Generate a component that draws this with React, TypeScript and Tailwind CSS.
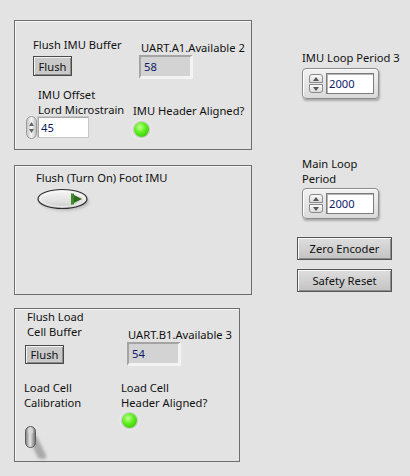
import React from "react";

const Flush = ({ h = "h-[20px]" }: { h?: string }) => (
  <div
    className={`w-[39px] ${h} flex items-center justify-center bg-[#c9c9c9] border border-[#4a4a4a] shadow-[inset_1px_1px_0_#f2f2f2,inset_-1px_-1px_0_#8c8c8c]`}
  >
    Flush
  </div>
);

const Indicator = ({ value }: { value: string }) => (
  <div className="w-[54px] h-[24px] flex items-center pl-[3px] bg-[#d3d3d3] border-t-2 border-l-2 border-b-[3px] border-r-[3px] border-t-[#a4a4a4] border-l-[#a4a4a4] border-b-[#f3f3f3] border-r-[#f3f3f3] text-[#0d1a66]">
    {value}
  </div>
);

const Led = () => (
  <div className="w-[15px] h-[15px] rounded-full bg-[radial-gradient(circle_at_40%_35%,#c6ff9a_0%,#5ef01f_40%,#2fb200_100%)] shadow-[0_0_0_1.5px_#d0d0d0,0_0_0_2.5px_#ececec]" />
);

const Spin = () => (
  <div className="flex flex-col gap-[1px] w-[14px]">
    <div className="h-[9px] rounded-t-[3px] border border-[#8a8a8a] bg-[linear-gradient(#fafafa,#dcdcdc)] flex items-center justify-center">
      <svg width="6" height="4" viewBox="0 0 6 4">
        <path d="M0 4 L3 0 L6 4 Z" fill="#555" />
      </svg>
    </div>
    <div className="h-[9px] rounded-b-[3px] border border-[#8a8a8a] bg-[linear-gradient(#fafafa,#dcdcdc)] flex items-center justify-center">
      <svg width="6" height="4" viewBox="0 0 6 4">
        <path d="M0 0 L6 0 L3 4 Z" fill="#555" />
      </svg>
    </div>
  </div>
);

const FramedNumeric = ({ value }: { value: string }) => (
  <div className="w-[77px] h-[31px] flex items-center gap-[3px] pl-[6px] rounded-[4px] border border-[#8c8c8c] bg-[linear-gradient(#f2f2f2,#dadada)] shadow-[1px_2px_2px_rgba(0,0,0,0.25),inset_1px_1px_0_#ffffff]">
    <Spin />
    <div className="w-[48px] h-[21px] flex items-center pl-[2px] bg-white border border-[#7c7c7c] shadow-[inset_1px_1px_0_#b5b5b5] text-[#0d1a66]">
      {value}
    </div>
  </div>
);

const BigButton = ({ label }: { label: string }) => (
  <div className="w-[95px] h-[23px] flex items-center justify-center bg-[linear-gradient(#dedede,#c3c3c3)] border border-[#555] shadow-[inset_1px_1px_0_#fafafa,inset_-1px_-1px_0_#8e8e8e]">
    {label}
  </div>
);

const OvalButton = () => (
  <svg width="56" height="27" viewBox="0 0 56 27">
    <defs>
      <linearGradient id="ov" x1="0" y1="0" x2="0" y2="1">
        <stop offset="0" stopColor="#f6f6f6" />
        <stop offset="0.6" stopColor="#e2e2e2" />
        <stop offset="1" stopColor="#c8c8c8" />
      </linearGradient>
      <filter id="ovb" x="-20%" y="-40%" width="140%" height="180%">
        <feGaussianBlur stdDeviation="1.5" />
      </filter>
    </defs>
    <ellipse cx="27.5" cy="13.5" rx="24.5" ry="9" fill="#9a9a9a" opacity="0.6" filter="url(#ovb)" />
    <ellipse cx="25.5" cy="11" rx="24.5" ry="9.5" fill="url(#ov)" stroke="#2d2d2d" strokeWidth="1.2" />
    <ellipse cx="25.5" cy="11" rx="22" ry="7.5" fill="none" stroke="#ffffff" strokeWidth="0.8" opacity="0.8" />
    <path d="M34 5.5 L45 11 L34 16.5 Z" fill="#2f6b1f" />
    <path d="M34 5.5 L37 5.5 L37 16.5 L34 16.5 Z" fill="#3f8a2a" />
  </svg>
);

const Toggle = () => (
  <svg width="26" height="36" viewBox="0 0 26 36">
    <defs>
      <linearGradient id="tg" x1="0" y1="0" x2="1" y2="0">
        <stop offset="0" stopColor="#7a7a7a" />
        <stop offset="0.45" stopColor="#e6e6e6" />
        <stop offset="1" stopColor="#6e6e6e" />
      </linearGradient>
      <filter id="tgb" x="-50%" y="-50%" width="200%" height="200%">
        <feGaussianBlur stdDeviation="1.6" />
      </filter>
    </defs>
    <path d="M6 16 L12 10 L22 30 Q23 34 19 34 L14 33 Z" fill="#a9a9a9" filter="url(#tgb)" />
    <rect x="1.5" y="1.5" width="10" height="21" rx="5" fill="url(#tg)" stroke="#5a5a5a" strokeWidth="1" />
    <ellipse cx="6.5" cy="6" rx="3" ry="3" fill="#d9d9d9" opacity="0.7" />
  </svg>
);

const App = () => {
  return (
    <div className="w-[410px] h-[476px] flex bg-[#e3e3e3] text-[11.2px] leading-[15px] text-[#111] font-['Noto_Sans',sans-serif]">
      {/* left: three grouped frames */}
      <div className="w-[252px] flex flex-col pl-[14px] pt-[20px]">
        <div className="w-[238px] h-[130px] flex border border-[#6e6e6e] shadow-[inset_1px_1px_0_#f6f6f6]">
          <div className="w-[117px] flex flex-col pl-[11px]">
            <div className="ml-[7px] mt-[16px] whitespace-nowrap">Flush IMU Buffer</div>
            <div className="ml-[7px] mt-[4px]">
              <Flush />
            </div>
            <div className="ml-[12px] mt-[11px] whitespace-nowrap">
              IMU Offset
              <br />
              Lord Microstrain
            </div>
            <div className="flex mt-[-1px]">
              <div className="w-[11px] h-[23px] flex flex-col items-center justify-center gap-[3px] rounded-full border border-[#9a9a9a] bg-[linear-gradient(90deg,#c8c8c8,#f4f4f4,#c2c2c2)]">
                <svg width="5" height="4" viewBox="0 0 5 4">
                  <path d="M0 4 L2.5 0 L5 4 Z" fill="#666" />
                </svg>
                <svg width="5" height="4" viewBox="0 0 5 4">
                  <path d="M0 0 L5 0 L2.5 4 Z" fill="#666" />
                </svg>
              </div>
              <div className="w-[52px] h-[22px] flex items-center pl-[3px] bg-white border border-[#c8c8c8] shadow-[inset_1px_1px_0_#a8a8a8] text-[#0d1a66]">
                45
              </div>
            </div>
          </div>
          <div className="flex flex-col">
            <div className="ml-[9px] mt-[19px] whitespace-nowrap">UART.A1.Available 2</div>
            <div className="ml-[7px]">
              <Indicator value="58" />
            </div>
            <div className="ml-[1px] mt-[24px] whitespace-nowrap">IMU Header Aligned?</div>
            <div className="ml-[2px] mt-[4px]">
              <Led />
            </div>
          </div>
        </div>

        <div className="w-[238px] h-[130px] mt-[15px] flex flex-col border border-[#6e6e6e] shadow-[inset_1px_1px_0_#f6f6f6]">
          <div className="ml-[21px] mt-[4px] whitespace-nowrap">Flush (Turn On) Foot IMU</div>
          <div className="ml-[22px] mt-[3px]">
            <OvalButton />
          </div>
        </div>

        <div className="w-[226px] h-[154px] mt-[13px] flex border border-[#6e6e6e] shadow-[inset_1px_1px_0_#f6f6f6]">
          <div className="w-[105px] flex flex-col pl-[9px]">
            <div className="ml-[3px] whitespace-nowrap">
              Flush Load
              <br />
              Cell Buffer
            </div>
            <div className="ml-[1px] mt-[6px]">
              <Flush h="h-[19px]" />
            </div>
            <div className="mt-[16px] whitespace-nowrap">
              Load Cell
              <br />
              Calibration
            </div>
            <div className="mt-[15px]">
              <Toggle />
            </div>
          </div>
          <div className="flex flex-col">
            <div className="ml-[8px] mt-[18px] whitespace-nowrap">UART.B1.Available 3</div>
            <div className="ml-[7px]">
              <Indicator value="54" />
            </div>
            <div className="ml-[1px] mt-[14px] whitespace-nowrap">
              Load Cell
              <br />
              Header Aligned?
            </div>
            <div className="ml-[2px] mt-[3px]">
              <Led />
            </div>
          </div>
        </div>
      </div>

      {/* right: loop periods and buttons */}
      <div className="flex flex-col ml-[45px]">
        <div className="ml-[5px] mt-[50px] whitespace-nowrap">IMU Loop Period 3</div>
        <div className="ml-[5px] mt-[3px]">
          <FramedNumeric value="2000" />
        </div>
        <div className="ml-[5px] mt-[57px]">
          Main Loop
          <br />
          Period
        </div>
        <div className="ml-[5px] mt-[2px]">
          <FramedNumeric value="2000" />
        </div>
        <div className="mt-[18px]">
          <BigButton label="Zero Encoder" />
        </div>
        <div className="mt-[9px]">
          <BigButton label="Safety Reset" />
        </div>
      </div>
    </div>
  );
};

export default App;
